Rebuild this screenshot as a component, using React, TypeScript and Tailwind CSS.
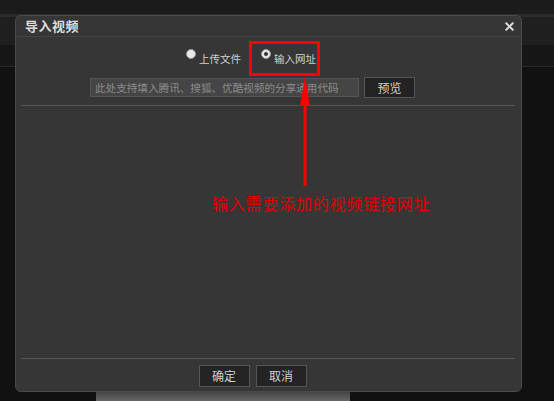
import { X } from "lucide-react";

const font = { fontFamily: '"Noto Sans CJK SC", "Noto Sans", sans-serif' };

function Radio({ checked, label }: { checked?: boolean; label: string }) {
    return (
        <label className="flex items-start gap-[3px] text-[10.5px] text-[#d0d0d0] leading-[12px]">
            <span className="mt-[-1px] w-[10px] h-[10px] rounded-full bg-[#e8e8e8] border border-[#999] flex items-center justify-center">
                {checked && <span className="w-[4px] h-[4px] rounded-full bg-[#333]"></span>}
            </span>
            <span className="mt-[3px]">{label}</span>
        </label>
    );
}

export default function App() {
    return (
        <div className="relative w-[554px] h-[401px] overflow-hidden bg-[#111111]" style={font}>
            {/* page behind the modal */}
            <div className="h-[14px] bg-[#1b1b1b]"></div>
            <div className="h-[3px] bg-[#2c2c2c]"></div>
            <div className="h-[28px] bg-[#1f1f1f]"></div>
            <div className="h-[22px] bg-[#161616] border-b border-[#2a2a2a]"></div>
            <div className="absolute left-[96px] bottom-0 w-[254px] h-[12px] bg-gradient-to-b from-[#3a3a3a] to-[#666]"></div>

            {/* modal */}
            <div className="absolute left-[15px] top-[15px] w-[507px] h-[377px] rounded-[6px] bg-[#363636] border border-[#4a4a4a] flex flex-col">
                <div className="h-[21px] border-b border-[#454545] flex items-center justify-between pl-[9px] pr-[5px]">
                    <span className="text-[13px] font-bold text-[#dcdcdc] tracking-[0.5px]">导入视频</span>
                    <X size={13} strokeWidth={3.5} className="text-[#e0e0e0]" />
                </div>

                <div className="flex gap-[20px] pt-[13px] pl-[170px]">
                    <Radio label="上传文件" />
                    <Radio checked label="输入网址" />
                </div>

                <div className="flex items-center gap-[5px] mt-[12px] pl-[74px]">
                    <div className="w-[269px] h-[19px] bg-[#454545] border border-[#555] text-[10.6px] text-[#8c8c8c] px-[4px] leading-[17px] whitespace-nowrap overflow-hidden">
                        此处支持填入腾讯、搜狐、优酷视频的分享通用代码
                    </div>
                    <button className="w-[51px] h-[21px] bg-[#232323] border border-[#555] text-[12px] text-[#cfcfcf]">
                        预览
                    </button>
                </div>

                <div className="mx-[6px] mt-[7px] h-px bg-[#575757]"></div>
                <div className="flex-1"></div>
                <div className="mx-[6px] h-px bg-[#575757]"></div>

                <div className="flex justify-center gap-[6px] pt-[6px] pb-[4px] pr-[32px]">
                    <button className="w-[51px] h-[22px] bg-[#242424] border border-[#555] text-[12px] text-[#cfcfcf]">确定</button>
                    <button className="w-[51px] h-[22px] bg-[#242424] border border-[#555] text-[12px] text-[#cfcfcf]">取消</button>
                </div>
            </div>

            {/* annotation */}
            <div className="absolute left-[249px] top-[41px] w-[71px] h-[35px] border-[3px] border-[#ff0000]"></div>
            <svg className="absolute left-[295px] top-[76px]" width="20" height="112" viewBox="0 0 20 112">
                <polygon points="10,0 5,30 15,30" fill="#ff0000" />
                <rect x="8.5" y="26" width="3" height="84" fill="#ff0000" />
            </svg>
            <div className="absolute left-[212px] top-[191px] text-[16px] text-[#e00000] tracking-[0.8px] whitespace-nowrap">
                输入需要添加的视频链接网址
            </div>
        </div>
    );
}
